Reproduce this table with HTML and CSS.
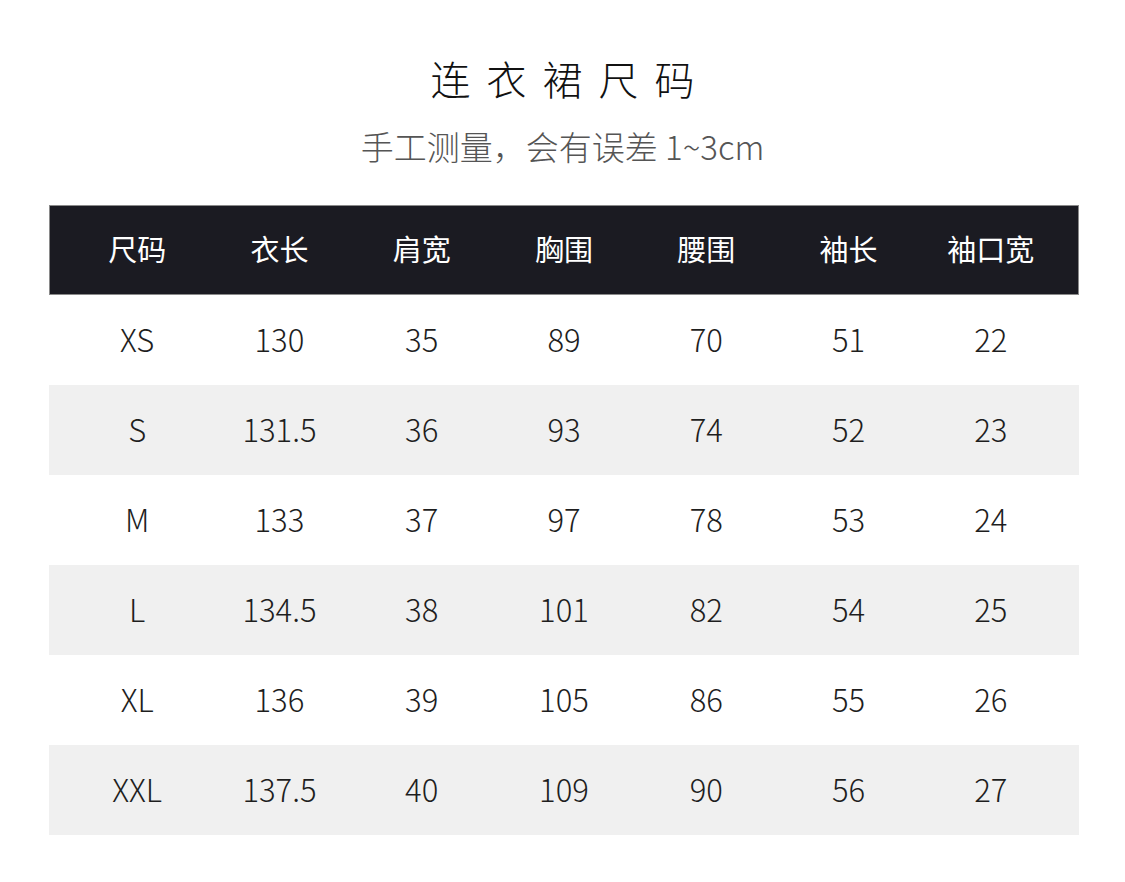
FILE: index.html
```html
<!DOCTYPE html>
<html lang="zh">
<head>
<meta charset="utf-8">
<link rel="stylesheet" href="styles.css">
</head>
<body>
<div class="page">
  <h1 class="title">连衣裙尺码</h1>
  <p class="subtitle">手工测量，会有误差 1~3cm</p>
  <div class="table">
    <div class="row head">
      <div>尺码</div><div>衣长</div><div>肩宽</div><div>胸围</div><div>腰围</div><div>袖长</div><div>袖口宽</div>
    </div>
    <div class="row">
      <div>XS</div><div>130</div><div>35</div><div>89</div><div>70</div><div>51</div><div>22</div>
    </div>
    <div class="row alt">
      <div>S</div><div>131.5</div><div>36</div><div>93</div><div>74</div><div>52</div><div>23</div>
    </div>
    <div class="row">
      <div>M</div><div>133</div><div>37</div><div>97</div><div>78</div><div>53</div><div>24</div>
    </div>
    <div class="row alt">
      <div>L</div><div>134.5</div><div>38</div><div>101</div><div>82</div><div>54</div><div>25</div>
    </div>
    <div class="row">
      <div>XL</div><div>136</div><div>39</div><div>105</div><div>86</div><div>55</div><div>26</div>
    </div>
    <div class="row alt">
      <div>XXL</div><div>137.5</div><div>40</div><div>109</div><div>90</div><div>56</div><div>27</div>
    </div>
  </div>
</div>
</body>
</html>
```

FILE: styles.css
```css
* { box-sizing: border-box; }
html, body { margin: 0; padding: 0; background: #fff; }
body {
  font-family: "Noto Sans CJK SC", "Noto Sans", sans-serif;
  color: #222;
}
.page {
  width: 1125px;
  padding-top: 54px;
}
.title {
  margin: 0;
  text-align: center;
  font-size: 40px;
  font-weight: 300;
  line-height: 48px;
  letter-spacing: 16px;
  padding-left: 16px;
  color: #111;
}
.subtitle {
  margin: 24px 0 0;
  text-align: center;
  font-size: 33px;
  line-height: 40px;
  font-weight: 300;
  color: #555;
}
.table {
  margin: 39px 0 0 49px;
  width: 1030px;
}
.row {
  display: grid;
  grid-template-columns: repeat(7, 1fr);
  height: 90px;
  padding: 0 17px 4px;
  align-items: center;
  text-align: center;
  font-size: 31px;
  font-weight: 300;
  color: #1e1e1e;
}
.row.alt { background: #f0f0f0; }
.row.head {
  background: #1b1b22;
  border: 1px solid #8a8a8a;
  color: #fff;
  font-size: 29px;
  font-weight: 400;
  padding: 0 16px 4px;
}
```
